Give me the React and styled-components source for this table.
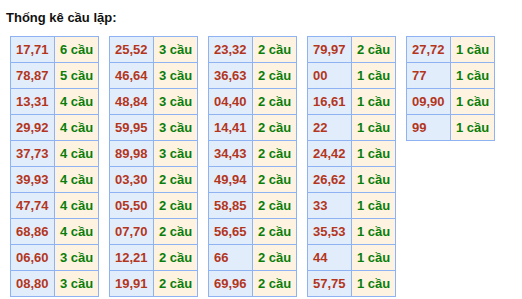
import { createGlobalStyle, styled } from "styled-components";

const GlobalStyle = createGlobalStyle`
  body {
    margin: 0;
    background: #ffffff;
    font-family: "Liberation Sans", Arial, sans-serif;
  }
`;

const Page = styled.div`
  padding: 10px 0 0 6px;
`;

const Title = styled.div`
  margin-bottom: 10px;
  font-size: 13px;
  line-height: 16px;
  font-weight: 700;
  color: #111111;
`;

const Tables = styled.div`
  display: flex;
  align-items: flex-start;
  gap: 10px;
  padding-left: 4px;
`;

const Table = styled.div`
  display: grid;
  grid-template-columns: 43px 43px;
  grid-auto-rows: 25px;
  gap: 1px;
  padding: 1px;
  background: #8fb2f3;
`;

const Cell = styled.div`
  display: flex;
  align-items: center;
  padding-left: 5px;
  font-size: 13px;
  font-weight: 700;
  white-space: nowrap;
  background: ${({ $count }) => ($count ? "#fef3e0" : "#e2edfc")};
  color: ${({ $count }) => ($count ? "#0b7d0b" : "#b3361c")};
`;

const columns = [
  [
    ["17,71", 6], ["78,87", 5], ["13,31", 4], ["29,92", 4], ["37,73", 4],
    ["39,93", 4], ["47,74", 4], ["68,86", 4], ["06,60", 3], ["08,80", 3],
  ],
  [
    ["25,52", 3], ["46,64", 3], ["48,84", 3], ["59,95", 3], ["89,98", 3],
    ["03,30", 2], ["05,50", 2], ["07,70", 2], ["12,21", 2], ["19,91", 2],
  ],
  [
    ["23,32", 2], ["36,63", 2], ["04,40", 2], ["14,41", 2], ["34,43", 2],
    ["49,94", 2], ["58,85", 2], ["56,65", 2], ["66", 2], ["69,96", 2],
  ],
  [
    ["79,97", 2], ["00", 1], ["16,61", 1], ["22", 1], ["24,42", 1],
    ["26,62", 1], ["33", 1], ["35,53", 1], ["44", 1], ["57,75", 1],
  ],
  [["27,72", 1], ["77", 1], ["09,90", 1], ["99", 1]],
];

export default function App() {
  return (
    <>
      <GlobalStyle />
      <Page>
        <Title>Thống kê cầu lặp:</Title>
        <Tables>
          {columns.map((rows, i) => (
            <Table key={i}>
              {rows.map(([pair, n]) => [
                <Cell key={pair + "a"}>{pair}</Cell>,
                <Cell key={pair + "b"} $count>
                  {n} cầu
                </Cell>,
              ])}
            </Table>
          ))}
        </Tables>
      </Page>
    </>
  );
}
